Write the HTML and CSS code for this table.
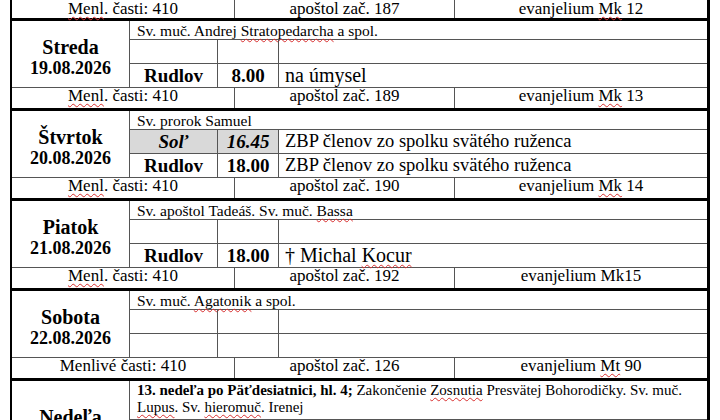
FILE: index.html
```html
<!DOCTYPE html>
<html lang="sk">
<head>
<meta charset="utf-8">
<title>Bohoslužby</title>
<link rel="stylesheet" href="styles.css">
</head>
<body>
<div class="sheet">
  <div class="readings lead">
    <span><u class="sp">Menl</u>. časti: 410</span>
    <span>apoštol zač. 187</span>
    <span>evanjelium <u class="sp">Mk</u> 12</span>
  </div>

  <section class="day">
    <div class="top">
      <div class="name"><span class="dn">Streda</span><span class="dt">19.08.2026</span></div>
      <div class="feast">Sv. muč. Andrej <u class="sp">Stratopedarcha</u> a spol.</div>
      <div class="place mid"></div><div class="time mid"></div><div class="intent mid"></div>
      <div class="place">Rudlov</div><div class="time">8.00</div><div class="intent">na úmysel</div>
    </div>
    <div class="readings">
      <span><u class="sp">Menl</u>. časti: 410</span>
      <span>apoštol zač. 189</span>
      <span>evanjelium <u class="sp">Mk</u> 13</span>
    </div>
  </section>

  <section class="day">
    <div class="top">
      <div class="name"><span class="dn">Štvrtok</span><span class="dt">20.08.2026</span></div>
      <div class="feast">Sv. prorok Samuel</div>
      <div class="place mid shade">Soľ</div><div class="time mid shade">16.45</div><div class="intent mid small">ZBP členov zo spolku svätého ruženca</div>
      <div class="place">Rudlov</div><div class="time">18.00</div><div class="intent small">ZBP členov zo spolku svätého ruženca</div>
    </div>
    <div class="readings">
      <span><u class="sp">Menl</u>. časti: 410</span>
      <span>apoštol zač. 190</span>
      <span>evanjelium <u class="sp">Mk</u> 14</span>
    </div>
  </section>

  <section class="day">
    <div class="top">
      <div class="name"><span class="dn">Piatok</span><span class="dt">21.08.2026</span></div>
      <div class="feast">Sv. apoštol Tadeáš. Sv. muč. <u class="sp">Bassa</u></div>
      <div class="place mid"></div><div class="time mid"></div><div class="intent mid"></div>
      <div class="place">Rudlov</div><div class="time">18.00</div><div class="intent">† Michal <u class="sp">Kocur</u></div>
    </div>
    <div class="readings">
      <span><u class="sp">Menl</u>. časti: 410</span>
      <span>apoštol zač. 192</span>
      <span>evanjelium Mk15</span>
    </div>
  </section>

  <section class="day">
    <div class="top">
      <div class="name"><span class="dn">Sobota</span><span class="dt">22.08.2026</span></div>
      <div class="feast">Sv. muč. <u class="sp">Agatonik</u> a spol.</div>
      <div class="place mid"></div><div class="time mid"></div><div class="intent mid"></div>
      <div class="place"></div><div class="time"></div><div class="intent"></div>
    </div>
    <div class="readings">
      <span>Menlivé časti: 410</span>
      <span>apoštol zač. 126</span>
      <span>evanjelium <u class="sp">Mt</u> 90</span>
    </div>
  </section>

  <section class="day">
    <div class="top tall">
      <div class="name"><span class="dn">Nedeľa</span><span class="dt">23.08.2026</span></div>
      <div class="feast two"><b>13. nedeľa po Päťdesiatnici, hl. 4;</b> Zakončenie <u class="sp">Zosnutia</u> Presvätej Bohorodičky. Sv. muč. <u class="sp">Lupus</u>. Sv. <u class="sp">hieromuč</u>. Irenej</div>
      <div class="place mid"></div><div class="time mid"></div><div class="intent mid"></div>
      <div class="place"></div><div class="time"></div><div class="intent"></div>
    </div>
  </section>
</div>
</body>
</html>
```

FILE: styles.css
```css
* {
  box-sizing: border-box;
}

body {
  margin: 0;
  background: #fff;
  color: #000;
  font-family: "Liberation Serif", "Times New Roman", serif;
}

.sheet {
  width: 700px;
  margin: 0 0 0 10px;
  border-left: 2px solid #000;
  border-right: 3px solid #000;
}

.sp {
  text-decoration: underline wavy #d83030;
  text-decoration-thickness: 1px;
  text-decoration-skip-ink: none;
  text-underline-offset: 2px;
}

.readings {
  display: grid;
  grid-template-columns: 223px 220px 1fr;
  height: 20px;
  font-size: 17px;
  line-height: 16px;
}

.readings span {
  text-align: center;
  border-right: 1px solid #555;
}

.readings span:last-child {
  border-right: 0;
}

.readings.lead {
  height: 21px;
  line-height: 18px;
  border-bottom: 3px solid #000;
}

.day {
  border-bottom: 3px solid #000;
}

.top {
  display: grid;
  grid-template-columns: 118px 88px 61px 1fr;
  grid-template-rows: 19px 24px 23px;
  border-bottom: 1px solid #555;
}

.top.tall {
  grid-template-rows: auto 24px 23px;
}

.name {
  grid-row: 1 / 4;
  display: flex;
  flex-direction: column;
  align-items: center;
  justify-content: center;
  padding-top: 6px;
  border-right: 1px solid #555;
  font-weight: bold;
}

.name .dn {
  font-size: 20px;
  line-height: 22px;
}

.name .dt {
  font-size: 18px;
  line-height: 20px;
}

.feast {
  grid-column: 2 / 5;
  padding: 1px 6px 0 7px;
  border-bottom: 1px solid #555;
  font-size: 15.5px;
  line-height: 17px;
}

.feast.two {
  padding: 1px 6px 3px 7px;
  font-size: 15px;
  line-height: 17px;
}

.place,
.time {
  border-right: 1px solid #555;
  text-align: center;
  font-weight: bold;
  font-size: 19px;
  line-height: 23px;
}

.intent {
  padding-left: 6px;
  font-size: 20px;
  line-height: 23px;
  white-space: nowrap;
}

.intent.small {
  font-size: 18.5px;
}

.mid {
  border-bottom: 1px solid #555;
}

.shade {
  background: #d9d9d9;
  font-style: italic;
}
```
